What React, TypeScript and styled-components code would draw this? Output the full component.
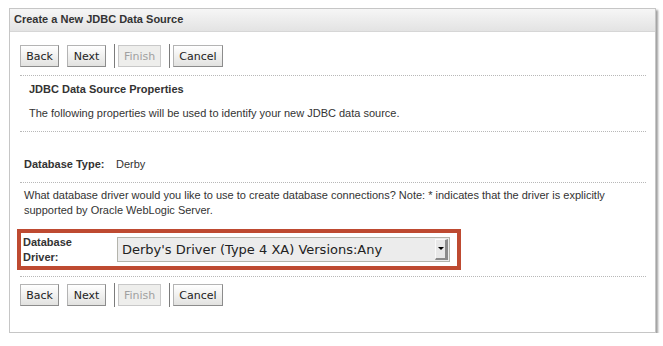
import React from 'react';
import styled, { createGlobalStyle } from 'styled-components';

const GlobalStyle = createGlobalStyle`
  body {
    margin: 0;
    background: #fff;
    font-family: "Liberation Sans", Arial, sans-serif;
    color: #333;
  }
`;

const Panel = styled.div`
  box-sizing: border-box;
  width: 647px;
  height: 325px;
  margin: 8px 0 0 9px;
  border: 1px solid #c6c6c6;
  box-shadow: 2px 2px 2px rgba(0, 0, 0, 0.38);
  background: #fff;
`;

const Header = styled.div`
  height: 22px;
  padding-left: 4px;
  border-bottom: 1px solid #d6d6d6;
  background: linear-gradient(#f6f6f6, #e3e3e3);
  font-size: 11px;
  font-weight: bold;
  line-height: 21px;
  color: #333;
`;

const Body = styled.div`
  padding: 0 9px 0 10px;
`;

const ButtonBar = styled.div<{ $top: number; $bottom: number }>`
  display: flex;
  align-items: center;
  padding: ${(p) => p.$top}px 0 ${(p) => p.$bottom}px;
`;

const Button = styled.button<{ $disabled?: boolean }>`
  box-sizing: border-box;
  min-width: 39px;
  height: 22px;
  margin: 0 8px 0 0;
  padding: 0 5px;
  border: 1px solid;
  border-color: ${(p) => (p.$disabled ? '#c8c8c8' : '#b4b4b4 #8c8c8c #8c8c8c #b4b4b4')};
  background: ${(p) => (p.$disabled ? '#eeeeec' : 'linear-gradient(#ffffff, #e2e2e0)')};
  font-family: "DejaVu Sans", sans-serif;
  font-size: 11px;
  color: ${(p) => (p.$disabled ? '#a0a0a0' : '#222')};
  cursor: ${(p) => (p.$disabled ? 'default' : 'pointer')};
`;

const Separator = styled.span`
  width: 1px;
  height: 24px;
  margin-right: 3px;
  background: #7c7c7c;
`;

const Section = styled.div<{ $top: number; $bottom: number }>`
  border-top: 1px dotted #b8b8b8;
  padding: ${(p) => p.$top}px 0 ${(p) => p.$bottom}px;
`;

const Heading = styled.div`
  padding-left: 9px;
  font-size: 11px;
  font-weight: bold;
  line-height: 14px;
`;

const Text = styled.p<{ $indent: number; $gap?: number }>`
  margin: ${(p) => p.$gap ?? 0}px 0 0;
  padding-left: ${(p) => p.$indent}px;
  font-size: 11px;
  line-height: 15px;
`;

const Field = styled.div`
  display: flex;
  align-items: center;
  padding-left: 4px;
  font-size: 11px;
  line-height: 14px;
`;

const Label = styled.span`
  width: 92px;
  flex: none;
  font-weight: bold;
`;

const Highlight = styled.div`
  display: flex;
  align-items: center;
  width: 444px;
  height: 41px;
  box-sizing: border-box;
  margin: 11px 0 0 -3px;
  padding: 0 7px 0 2px;
  border: 4px solid #be4a31;
`;

const DriverLabel = styled.span`
  width: 94px;
  flex: none;
  font-size: 11px;
  font-weight: bold;
  line-height: 15px;
`;

const SelectBox = styled.div`
  display: flex;
  align-items: center;
  box-sizing: border-box;
  width: 333px;
  height: 25px;
  padding: 0 1px 0 4px;
  border: 1px solid #b4b4ac;
  background: #ececec;
  font-family: "DejaVu Sans", sans-serif;
  font-size: 13px;
  color: #222;
`;

const SelectText = styled.span`
  flex: 1;
  white-space: nowrap;
`;

const ArrowButton = styled.span`
  display: flex;
  justify-content: center;
  padding-top: 7px;
  box-sizing: border-box;
  width: 13px;
  height: 21px;
  border-style: solid;
  border-width: 1px 3px 2px 1px;
  border-color: #fafafa #8a8a8a #8a8a8a #fafafa;
  background: #e8e8e8;

  &::after {
    content: '';
    width: 0;
    height: 0;
    border-left: 3px solid transparent;
    border-right: 3px solid transparent;
    border-top: 3px solid #000;
  }
`;

const WizardButtons: React.FC<{ top: number; bottom: number }> = ({ top, bottom }) => (
  <ButtonBar $top={top} $bottom={bottom}>
    <Button>Back</Button>
    <Button>Next</Button>
    <Separator />
    <Button $disabled>Finish</Button>
    <Separator />
    <Button>Cancel</Button>
  </ButtonBar>
);

const App: React.FC = () => {
  return (
    <>
      <GlobalStyle />
      <Panel>
        <Header>Create a New JDBC Data Source</Header>
        <Body>
          <WizardButtons top={12} bottom={7} />
          <Section $top={6} $bottom={10}>
            <Heading>JDBC Data Source Properties</Heading>
            <Text $indent={9} $gap={10}>
              The following properties will be used to identify your new JDBC data source.
            </Text>
          </Section>
          <Section $top={25} $bottom={11}>
            <Field>
              <Label>Database Type:</Label>
              <span>Derby</span>
            </Field>
          </Section>
          <Section $top={5} $bottom={6}>
            <Text $indent={4}>
              What database driver would you like to use to create database connections? Note: * indicates that the
              driver is explicitly supported by Oracle WebLogic Server.
            </Text>
            <Highlight>
              <DriverLabel>
                Database
                <br />
                Driver:
              </DriverLabel>
              <SelectBox>
                <SelectText>Derby's Driver (Type 4 XA) Versions:Any</SelectText>
                <ArrowButton />
              </SelectBox>
            </Highlight>
          </Section>
          <Section $top={6} $bottom={0}>
            <WizardButtons top={0} bottom={0} />
          </Section>
        </Body>
      </Panel>
    </>
  );
};

export default App;
